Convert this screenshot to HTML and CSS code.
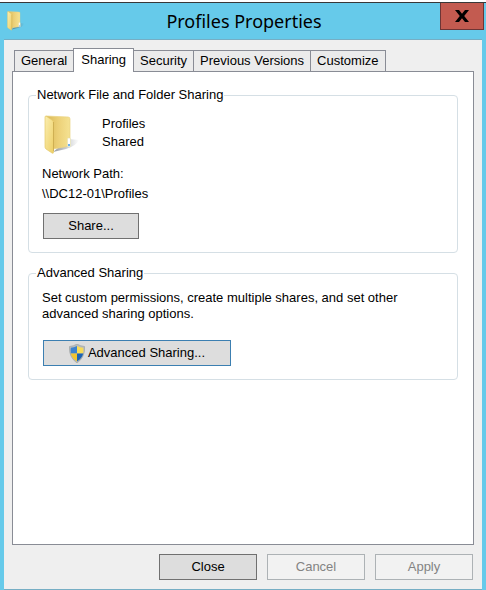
FILE: index.html
```
<!DOCTYPE html>
<html lang="en">
<head>
<meta charset="utf-8">
<title>Profiles Properties</title>
<link rel="stylesheet" href="styles.css">
</head>
<body>
<svg class="defs" width="0" height="0" aria-hidden="true">
  <defs>
    <linearGradient id="flap" x1="0" y1="0" x2="1" y2="1">
      <stop offset="0" stop-color="#fbeeb0"/>
      <stop offset="1" stop-color="#edcf66"/>
    </linearGradient>
    <linearGradient id="back" x1="0" y1="0" x2="1" y2="0">
      <stop offset="0" stop-color="#d9b855"/>
      <stop offset="0.5" stop-color="#ecd077"/>
      <stop offset="1" stop-color="#f5e292"/>
    </linearGradient>
    <linearGradient id="shade" x1="0" y1="0" x2="1" y2="0">
      <stop offset="0" stop-color="#4c5560" stop-opacity="0.6"/>
      <stop offset="1" stop-color="#4c5560" stop-opacity="0"/>
    </linearGradient>
    <symbol id="folder" viewBox="0 0 36 40">
      <path d="M9 37L25 24L35 25Q32 31 22 34Z" fill="url(#shade)"/>
      <path d="M2 1L24 2Q26 2 26 4V31L9 34L2 32Z" fill="url(#back)" stroke="#ead282" stroke-width="0.7"/>
      <path d="M1 2Q1 1 2 1L8 5Q9.500 6 9.500 8V37Q9.500 39 8 38L2 34Q1 33 1 32Z" fill="url(#flap)" stroke="#e5c968" stroke-width="0.7"/>
      <path d="M9.500 7V36" stroke="#c9a84c" stroke-width="0.8"/>
      <rect x="23.500" y="23" width="3" height="9" rx="1" fill="#fff" stroke="#e2dfb4" stroke-width="0.6"/>
      <rect x="24.200" y="29" width="1.600" height="2.200" fill="#4a9fe8"/>
    </symbol>
  </defs>
</svg>
<main class="window">
  <header class="titlebar">
    <svg class="title-icon" aria-hidden="true"><use href="#folder"/></svg>
    <h1>Profiles Properties</h1>
    <button class="close" type="button" aria-label="Close window">
      <svg viewBox="0 0 14 12" aria-hidden="true"><path d="M0 0H4L7 3.800L10 0H14L9.200 6L14 12H10L7 8.200L4 12H0L4.800 6Z"/></svg>
    </button>
  </header>
  <div class="client">
    <div class="tabs" role="tablist">
      <button class="tab" type="button" role="tab">General</button>
      <button class="tab active" type="button" role="tab" aria-selected="true">Sharing</button>
      <button class="tab" type="button" role="tab">Security</button>
      <button class="tab" type="button" role="tab">Previous Versions</button>
      <button class="tab" type="button" role="tab">Customize</button>
    </div>
    <section class="panel" role="tabpanel">
      <fieldset class="group">
        <legend>Network File and Folder Sharing</legend>
        <div class="item">
          <svg class="folder" aria-hidden="true"><use href="#folder"/></svg>
          <p>Profiles<br>Shared</p>
        </div>
        <p class="path">Network Path:<br>\\DC12-01\Profiles</p>
        <button class="btn share" type="button">Share...</button>
      </fieldset>
      <fieldset class="group">
        <legend>Advanced Sharing</legend>
        <p class="note">Set custom permissions, create multiple shares, and set other<br>advanced sharing options.</p>
        <button class="btn advanced" type="button">
          <svg class="shield" viewBox="0 0 16 19" aria-hidden="true">
            <path d="M8 0Q11 2 15.500 2.500Q16.500 13 8 19Q-0.500 13 0.500 2.500Q5 2 8 0Z" fill="#b9bcbc" stroke="#8f9698" stroke-width="0.5"/>
            <path d="M8 2V9.500H1.800Q1.400 6 1.800 3.700Q5 3.500 8 2Z" fill="#3b82cf"/>
            <path d="M8 2V9.500H14.200Q14.600 6 14.200 3.700Q11 3.500 8 2Z" fill="#f8dc58"/>
            <path d="M8 9.500V17.500Q2.700 14 1.800 9.500Z" fill="#f0c530"/>
            <path d="M8 9.500V17.500Q13.300 14 14.200 9.500Z" fill="#1c63b4"/>
          </svg>
          Advanced Sharing...
        </button>
      </fieldset>
    </section>
    <footer class="actions">
      <button class="btn" type="button">Close</button>
      <button class="btn" type="button" disabled>Cancel</button>
      <button class="btn" type="button" disabled>Apply</button>
    </footer>
  </div>
</main>
</body>
</html>
```
FILE: styles.css
```
* { box-sizing: border-box; }

body {
  margin: 0;
  background: #fff;
  color: #000;
  font: 13px/16px "Liberation Sans", Arial, sans-serif;
}

p, h1 { margin: 0; }
button { font: inherit; color: inherit; }
.defs { display: block; }

.window {
  display: flex;
  flex-direction: column;
  min-height: calc(100vh - 2px);
  margin-top: 2px;
  padding: 0 4px;
  border-top: 1px solid #383838;
  background: #66caea;
}

.titlebar {
  display: grid;
  grid-template-columns: 44px 1fr 44px;
  align-items: center;
  height: 36px;
  margin-right: -2px;
}

.title-icon {
  width: 18px;
  height: 20px;
  margin-left: 3px;
}

.titlebar h1 {
  font: 18px/36px "Noto Sans", "Open Sans", sans-serif;
  text-align: center;
}

.close {
  display: grid;
  place-items: center;
  align-self: start;
  height: 27px;
  padding: 0;
  border: 1px solid #6d3535;
  border-top: 0;
  background: #c35b50;
}

.close svg {
  width: 14px;
  height: 12px;
}

.client {
  display: flex;
  flex: 1;
  flex-direction: column;
  padding: 8px 8px 9px;
  border-top: 1px solid #76aec4;
  border-bottom: 1px solid #76aec4;
  background: #efefef;
}

.tabs {
  display: flex;
  align-items: flex-end;
  padding-left: 2px;
}

.tab {
  height: 21px;
  margin-right: -1px;
  padding: 0 6px;
  border: 1px solid #898c95;
  border-bottom: 0;
  background: #ebebeb;
  white-space: nowrap;
}

.tab.active {
  position: relative;
  height: 24px;
  margin-bottom: -1px;
  padding: 0 7px 2px;
  background: #fff;
}

.panel {
  flex: 1;
  padding: 15px;
  border: 1px solid #898c95;
  background: #fff;
}

.group {
  min-width: 0;
  margin: 0 0 12px;
  padding: 0 13px 13px;
  border: 1px solid #d5dfe5;
  border-radius: 4px;
}

.group legend {
  margin-left: -6px;
  padding: 0 1px;
}

.item {
  display: flex;
  gap: 22px;
  padding-top: 12px;
  line-height: 18px;
}

.folder {
  width: 36px;
  height: 40px;
  margin-left: 2px;
}

.path {
  padding: 9px 0;
  line-height: 20px;
}

.note {
  padding: 9px 0 18px;
}

.btn {
  display: flex;
  align-items: center;
  justify-content: center;
  width: 98px;
  height: 26px;
  padding: 0;
  border: 1px solid #707070;
  background: #ddd;
}

.btn:disabled {
  border-color: #adb2b5;
  background: #f2f2f2;
  color: #838383;
}

.share {
  width: 96px;
  margin-left: 1px;
}

.advanced {
  gap: 3px;
  width: 188px;
  margin-left: 1px;
  border-color: #3c7fb1;
}

.shield {
  width: 16px;
  height: 19px;
}

.actions {
  display: flex;
  justify-content: flex-end;
  gap: 10px;
  padding: 9px 1px 0 0;
}
```
